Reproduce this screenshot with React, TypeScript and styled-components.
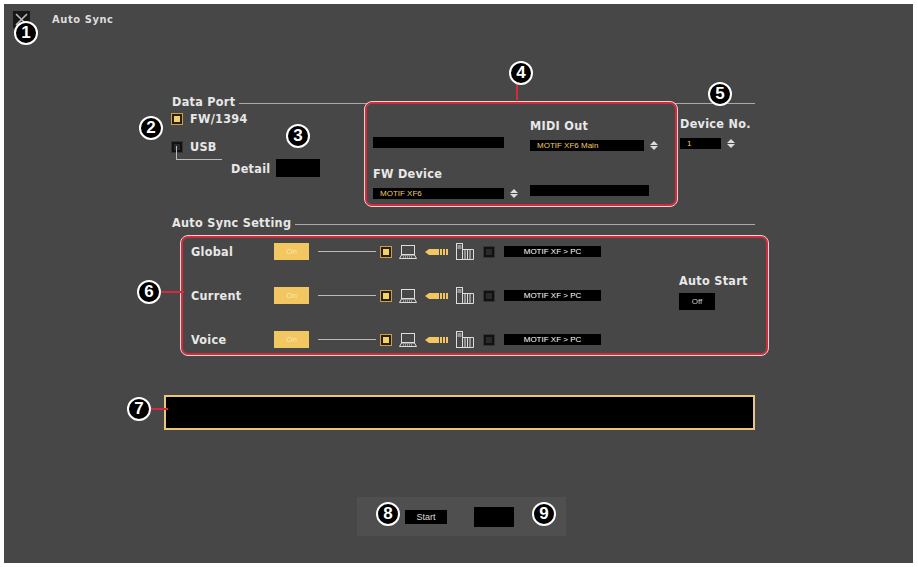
import React from "react";
import styled, { createGlobalStyle } from "styled-components";

const G = createGlobalStyle`
  html,body{margin:0;background:#fff;}
  body{font-family:"DejaVu Sans Condensed","Liberation Sans",sans-serif;}
`;
const Frame = styled.div`
  position:relative;margin:4px 5px 0 4px;height:559px;background:#474747;color:#e6e6e6;
  box-sizing:border-box;padding-top:6px;
`;
const TitleBar = styled.div`display:flex;align-items:center;gap:22px;padding-left:9px;height:18px;`;
const CloseBtn = styled.div`width:17px;height:17px;background:#161616;display:flex;align-items:center;justify-content:center;`;
const Title = styled.span`font-size:11px;font-weight:bold;letter-spacing:0.6px;color:#ddd;`;
const Label = styled.div<{ size?: number }>`font-size:${p => p.size ?? 12.5}px;font-weight:bold;color:#e8e8e8;white-space:nowrap;letter-spacing:0.3px;`;
const SectionHead = styled.div<{ mt: number }>`
  display:flex;align-items:center;gap:4px;margin:${p => p.mt}px 158px 0 168px;
  &::after{content:"";flex:1;height:1px;background:#aaa;margin-top:4px;}
`;
const Row = styled.div`display:flex;align-items:center;`;
const Check = styled.div<{ on?: boolean }>`
  width:10px;height:10px;box-sizing:border-box;flex:none;
  background:${p => p.on ? "#f5cf6a" : "#2a2a2a"};border:2px solid ${p => p.on ? "#2a2208" : "#111"};
  outline:1px solid ${p => p.on ? "#caa050" : "#333"};
`;
const BlackBox = styled.div<{ w: number; h?: number }>`
  width:${p => p.w}px;height:${p => p.h ?? 11}px;background:#000;flex:none;
  font-family:"Liberation Sans",sans-serif;font-size:8px;color:#f0c86a;display:flex;align-items:center;padding-left:7px;box-sizing:border-box;
`;
const Spin = styled.div`width:9px;display:flex;flex-direction:column;align-items:center;gap:1px;margin-left:5px;
  &::before{content:"";border:4px solid transparent;border-bottom:4px solid #ddd;border-top:0;}
  &::after{content:"";border:4px solid transparent;border-top:4px solid #ddd;border-bottom:0;}
`;
const RedBox = styled.div`border:2px solid #d22c3c;outline:1px solid #f2d0d4;border-radius:7px;box-sizing:border-box;`;
const PortArea = styled.div`display:flex;margin:-7px 0 0 168px;height:104px;`;
const PortLeft = styled.div`width:193px;padding-top:9px;display:flex;flex-direction:column;gap:13px;position:relative;`;
const Tree = styled.div`position:absolute;left:4px;top:44px;width:45px;height:13px;border-left:1px solid #bbb;border-bottom:1px solid #bbb;`;
const DetailRow = styled(Row)`margin-left:59px;gap:6px;margin-top:-8px;`;
const PortBox = styled(RedBox)`width:312px;height:104px;display:grid;grid-template-columns:157px 150px;padding:14px 0 0 6px;row-gap:0;`;
const Cell = styled.div`display:flex;flex-direction:column;gap:7px;`;
const DevNo = styled.div`padding:14px 0 0 3px;display:flex;flex-direction:column;gap:7px;`;
const SyncBox = styled(RedBox)`margin:6px 0 0 177px;width:587px;height:119px;padding:5px 0 0 8px;display:flex;`;
const SyncRows = styled.div`display:flex;flex-direction:column;gap:27px;`;
const SyncRow = styled(Row)`height:17px;`;
const RowLabel = styled(Label)`width:83px;`;
const OnBtn = styled.div`width:35px;height:17px;background:#f2c660;color:#fbe7b0;font-size:8px;font-family:"Liberation Sans",sans-serif;display:flex;align-items:center;justify-content:center;`;
const HLine = styled.div`width:58px;height:1px;background:#bbb;margin:0 5px 0 9px;`;
const Icons = styled(Row)`gap:8px;margin:0 10px 0 8px;`;
const Msg = styled(BlackBox)`color:#fff;justify-content:center;padding:0;`;
const AutoStart = styled.div`display:flex;flex-direction:column;gap:5px;margin:30px 0 0 78px;`;
const OffBtn = styled(Msg)`width:36px;height:17px;color:#ccc;`;
const Status = styled.div`margin:40px 0 0 160px;width:591px;height:35px;background:#000;border:2px solid #e9c777;box-sizing:border-box;`;
const BottomBar = styled.div`margin:67px 0 0 353px;width:209px;height:39px;background:#4f4f4f;display:flex;align-items:center;gap:27px;padding-left:48px;box-sizing:border-box;`;
const StartBtn = styled(Msg)`width:42px;height:14px;font-size:9px;color:#ddd;`;
const Badge = styled.div<{ x: number; y: number }>`
  position:absolute;left:${p => p.x - 12}px;top:${p => p.y - 12}px;width:20px;height:20px;border-radius:50%;
  background:#000;border:2px solid #fff;color:#fff;font:bold 17px "Liberation Sans",sans-serif;
  display:flex;align-items:center;justify-content:center;
`;
const Stem = styled.div<{ x: number; y: number; w: number; h: number }>`
  position:absolute;left:${p => p.x}px;top:${p => p.y}px;width:${p => p.w}px;height:${p => p.h}px;background:#d22c3c;
`;

const Laptop = () => (
  <svg width="18" height="16" viewBox="0 0 18 16" fill="none" stroke="#ddd" strokeWidth="1">
    <rect x="2.5" y="1.5" width="13" height="9" /><path d="M0.5 14.5 L2.5 11 H15.5 L17.5 14.5 Z" /><path d="M4 13h10" strokeDasharray="1 1" />
  </svg>
);
const Cable = () => (
  <svg width="23" height="8" viewBox="0 0 23 8">
    <path d="M0 4 L4 1 H14 V7 H4 Z" fill="#f2c660" /><rect x="15" y="1" width="2" height="6" fill="#f2c660" /><rect x="18" y="1" width="2" height="6" fill="#f2c660" /><rect x="21" y="1" width="2" height="6" fill="#f2c660" />
  </svg>
);
const Keys = () => (
  <svg width="18" height="17" viewBox="0 0 18 17" fill="none" stroke="#ddd" strokeWidth="1">
    <rect x="0.5" y="0.5" width="6" height="16" /><path d="M6.5 6.5H17.5V16.5H6.5M9 7v9M11.5 7v9M14 7v9M1.5 3h4M1.5 5h4" />
  </svg>
);

const rows = ["Global", "Current", "Voice"];

export default function App() {
  return (
    <>
      <G />
      <Frame>
        <TitleBar>
          <CloseBtn>
            <svg width="13" height="13" viewBox="0 0 13 13"><path d="M1 1L12 12M12 1L1 12" stroke="#bbb" strokeWidth="1.6" /></svg>
          </CloseBtn>
          <Title>Auto Sync</Title>
        </TitleBar>
        <SectionHead mt={66}><Label>Data Port</Label></SectionHead>
        <PortArea>
          <PortLeft>
            <Row style={{ gap: 8 }}><Check on /><Label>FW/1394</Label></Row>
            <Row style={{ gap: 8 }}><Check /><Label>USB</Label></Row>
            <Tree />
            <DetailRow><Label>Detail</Label><BlackBox w={44} h={18} /></DetailRow>
          </PortLeft>
          <PortBox>
            <Cell style={{ paddingTop: 19 }}><BlackBox w={131} /></Cell>
            <Cell><Label>MIDI Out</Label><Row><BlackBox w={114}>MOTIF XF6 Main</BlackBox><Spin /></Row></Cell>
            <Cell style={{ marginTop: 10 }}><Label>FW Device</Label><Row><BlackBox w={131}>MOTIF XF6</BlackBox><Spin /></Row></Cell>
            <Cell style={{ paddingTop: 29 }}><BlackBox w={119} /></Cell>
          </PortBox>
          <DevNo><Label>Device No.</Label><Row><BlackBox w={41}>1</BlackBox><Spin /></Row></DevNo>
        </PortArea>
        <SectionHead mt={9}><Label>Auto Sync Setting</Label></SectionHead>
        <SyncBox>
          <SyncRows>
            {rows.map(r => (
              <SyncRow key={r}>
                <RowLabel>{r}</RowLabel>
                <OnBtn>On</OnBtn>
                <HLine />
                <Check on />
                <Icons><Laptop /><Cable /><Keys /></Icons>
                <Check />
                <Msg w={97} style={{ marginLeft: 10 }}>MOTIF XF &gt; PC</Msg>
              </SyncRow>
            ))}
          </SyncRows>
          <AutoStart><Label>Auto Start</Label><OffBtn w={36}>Off</OffBtn></AutoStart>
        </SyncBox>
        <Status />
        <BottomBar><StartBtn w={42}>Start</StartBtn><BlackBox w={40} h={20} /></BottomBar>

        <Badge x={22} y={29}>1</Badge>
        <Badge x={147} y={124}>2</Badge>
        <Badge x={294} y={132}>3</Badge>
        <Stem x={512} y={78} w={2} h={18} />
        <Badge x={517} y={69}>4</Badge>
        <Badge x={716} y={90}>5</Badge>
        <Stem x={150} y={287} w={30} h={2} />
        <Badge x={145} y={288}>6</Badge>
        <Stem x={140} y={404} w={24} h={2} />
        <Badge x={135} y={405}>7</Badge>
        <Badge x={384} y={510}>8</Badge>
        <Badge x={540} y={510}>9</Badge>
      </Frame>
    </>
  );
}
